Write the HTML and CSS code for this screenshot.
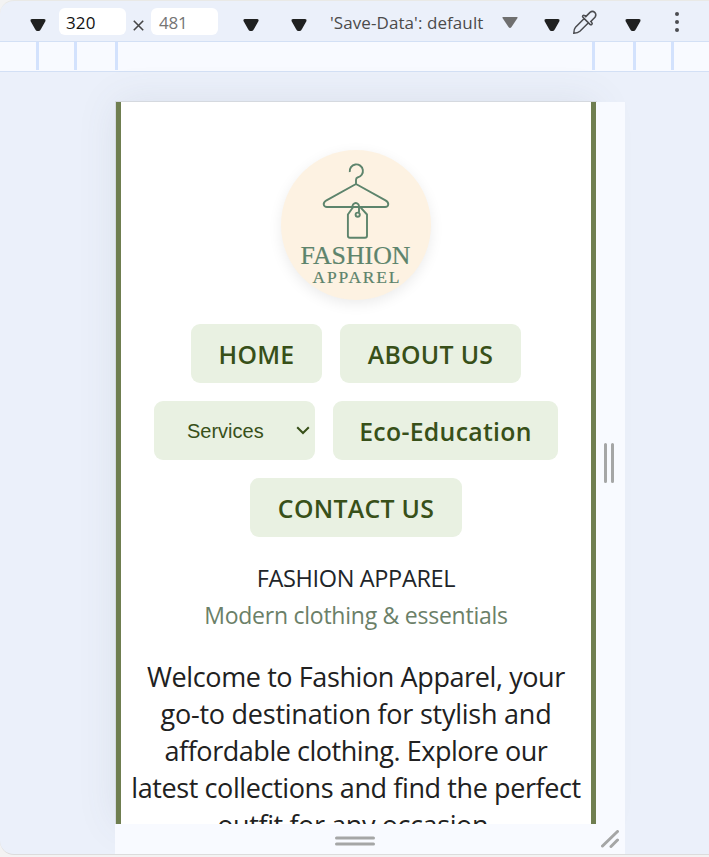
FILE: index.html
```html
<!DOCTYPE html>
<html lang="en">
<head>
<meta charset="utf-8">
<title>Fashion Apparel</title>
<link rel="stylesheet" href="styles.css">
</head>
<body>
<div class="panel">
  <header class="toolbar">
    <svg class="caret c1" viewBox="0 0 16 12"><path d="M2 0h12q2 0 1.500 2L11 10q-1 2-2 2H7q-1 0-2-2L.5 2Q0 0 2 0z"/></svg>
    <span class="dim">320</span>
    <svg class="times" viewBox="0 0 11 11"><path d="M.8.8l9.400 9.400M10.200.8L.8 10.200"/></svg>
    <span class="dim muted">481</span>
    <svg class="caret c2" viewBox="0 0 16 12"><path d="M2 0h12q2 0 1.500 2L11 10q-1 2-2 2H7q-1 0-2-2L.5 2Q0 0 2 0z"/></svg>
    <svg class="caret c3" viewBox="0 0 16 12"><path d="M2 0h12q2 0 1.500 2L11 10q-1 2-2 2H7q-1 0-2-2L.5 2Q0 0 2 0z"/></svg>
    <span class="save">'Save-Data': default</span>
    <svg class="caret grey" viewBox="0 0 16 12"><path d="M1 0h14q1 0 .5 1L9.500 10q-1.500 2-3 0L.5 1Q0 0 1 0z"/></svg>
    <svg class="caret c4" viewBox="0 0 16 12"><path d="M2 0h12q2 0 1.500 2L11 10q-1 2-2 2H7q-1 0-2-2L.5 2Q0 0 2 0z"/></svg>
    <svg class="dropper" viewBox="0 0 26 26"><path d="M12.200 9.500L3.500 18.200Q1.800 20 1.800 24.200Q6 24 7.900 22.300L16.500 13.700M11 8.400l7 7q1 .8 1.800 0q.9-1 0-1.900l-1-1.100 4.200-4.200q1.700-2.300 0-4.600-2.500-2.300-5-.2l-4.200 4.200-1.100-1q-1-.8-1.800 0-.8.9.1 1.800z"/></svg>
    <svg class="caret c5" viewBox="0 0 16 12"><path d="M2 0h12q2 0 1.500 2L11 10q-1 2-2 2H7q-1 0-2-2L.5 2Q0 0 2 0z"/></svg>
    <svg class="more" viewBox="0 0 4 20"><circle cx="2" cy="2" r="2"/><circle cx="2" cy="10" r="2"/><circle cx="2" cy="18" r="2"/></svg>
  </header>
  <div class="ruler"><i></i><i></i><i></i><i></i><i></i><i></i></div>
  <div class="stage">
    <main class="device">
      <svg class="logo" viewBox="0 0 150 150">
        <g class="lines">
          <path d="M68.800 22A6.600 6.600 0 1 1 76.500 27.500Q75 28 75 30V34L45.500 50.300C41 53 42.500 57 46 57H104C108 57 108.500 52.500 104.500 50.300L75 34"/>
          <path d="M72 57.300L66.900 64.500V85.700q0 2 2 2H84q2 0 2-2V64.500L79.500 57.300M72.200 58.500A3.300 3.300 0 1 1 78 56V62.500"/>
          <circle cx="76.700" cy="64.700" r="2.100"/>
        </g>
        <text class="brand" x="19.500" y="114" textLength="110" lengthAdjust="spacingAndGlyphs">FASHION</text>
        <text class="brand small" x="31.500" y="132.500" textLength="87" lengthAdjust="spacing">APPAREL</text>
      </svg>
      <nav class="nav">
        <a class="btn home">HOME</a><a class="btn about">ABOUT US</a>
        <a class="btn services"><span>Services</span><svg viewBox="0 0 14 9"><path d="M1.200 1.200L7 7l5.800-5.800"/></svg></a><a class="btn eco">Eco-Education</a>
        <a class="btn contact">CONTACT US</a>
      </nav>
      <div class="title">FASHION APPAREL</div>
      <div class="tagline">Modern clothing &amp; essentials</div>
      <p class="welcome"><span class="w1">Welcome to Fashion Apparel, your</span><span class="w2">go-to destination for stylish and</span><span class="w3">affordable clothing. Explore our</span><span class="w4">latest collections and find the perfect</span><span class="w5">outfit for any occasion.</span></p>
    </main>
    <div class="resize-right"><svg viewBox="0 0 10 40"><path d="M1.500 1.500v37M8.500 1.500v37"/></svg></div>
    <div class="resize-bottom">
      <svg class="grip" viewBox="0 0 40 10"><path d="M1.500 2h37M1.500 8h37"/></svg>
      <svg class="corner" viewBox="0 0 18 18"><path d="M1.500 16L16.500 1.500M10 16.500l6.500-6.500"/></svg>
    </div>
  </div>
</div>
</body>
</html>
```
FILE: styles.css
```css
* { box-sizing: border-box; }
body { margin: 0; height: 857px; overflow: hidden; background: #f3f3f3; font-family: "Open Sans", sans-serif; }
svg { display: block; flex: none; }
.panel { height: 855px; margin-top: 0; border-top: 1px solid #e9e9e6; border-bottom: 1px solid #dcdcdc; border-radius: 14px 0 0 14px; background: #ebf0fa; overflow: hidden; }
.toolbar { height: 40px; display: flex; align-items: flex-start; padding-left: 30px; }
.caret { width: 16px; height: 12px; margin-top: 18px; fill: #202121; }
.dim { width: 67px; height: 27px; margin: 7px 0 0 13px; padding-left: 7px; border-radius: 6px; background: #fff; color: #111; font-size: 17px; line-height: 29px; letter-spacing: 0.1px; }
.muted { margin-left: 7px; color: #757575; padding-left: 8px; letter-spacing: -0.2px; }
.times { width: 11px; height: 11px; margin: 19px 0 0 7px; fill: none; stroke: #474747; stroke-width: 1.6; }
.c2 { margin-left: 25px; }
.c3 { margin-left: 32px; }
.save { width: 156px; margin: 8px 0 0 23px; white-space: nowrap; color: #4b4b4b; font-size: 17px; line-height: 28px; letter-spacing: 0.08px; }
.grey { margin: 16px 0 0 16px; fill: #6f6f6f; }
.c4 { margin-left: 26px; }
.dropper { width: 26px; height: 26px; margin: 8px 0 0 12px; fill: none; stroke: #4b4c50; stroke-width: 1.5; }
.c5 { margin-left: 27px; }
.more { width: 4px; height: 20px; margin: 11px 0 0 34px; fill: #4b4c50; }
.ruler { height: 31px; display: flex; border: solid #d3e0f5; border-width: 1px 0; background: #f8faff; padding-left: 36px; }
.ruler i { width: 3px; height: 28px; background: #d3e2fd; margin-right: 35px; }
.ruler i:nth-child(2) { margin-right: 38px; }
.ruler i:nth-child(3) { margin-right: 474px; }
.ruler i:nth-child(4) { margin-right: 38px; }
.stage { display: grid; grid-template-columns: 481px 29px; grid-template-rows: 722px 30px; padding: 30px 0 0 115px; }
.device { margin-left: 1px; border: solid #6f7e50; border-width: 0 5px; background: #fff; padding-top: 48px; overflow: hidden; display: flex; flex-direction: column; align-items: center; box-shadow: 0 0 0 1px #d5d9df, 0 0 38px rgba(80, 90, 110, .1); }
.logo { width: 150px; height: 150px; border-radius: 50%; background: #fdf2e2; box-shadow: 0 4px 14px rgba(0, 0, 0, .08); }
.lines { fill: none; stroke: #5d846c; stroke-width: 1.9; stroke-linejoin: round; }
.brand { fill: #5d846c; stroke: #5d846c; stroke-width: .2; font: 25px "Liberation Serif", serif; }
.small { font-size: 17.5px; }
.nav { width: 440px; margin-top: 24px; display: flex; flex-wrap: wrap; justify-content: center; gap: 18px; }
.btn { height: 59px; border-radius: 9px; background: #e9f1e2; color: #385019; display: flex; align-items: center; justify-content: center; font-size: 24.8px; font-weight: 600; letter-spacing: .3px; white-space: nowrap; padding-top: 1px; }
.home { width: 131px; }
.about { width: 181px; }
.services { width: 161px; font: 20px "Liberation Sans", sans-serif; letter-spacing: 0; justify-content: flex-start; padding: 0 5px 0 33px; }
.services span { padding-top: 2px; }
.services svg { width: 14px; height: 9px; margin-left: auto; fill: none; stroke: #385019; stroke-width: 2; }
.eco { width: 225px; }
.contact { width: 212px; }
.title { margin-top: 23px; height: 37px; line-height: 37px; font-size: 23.5px; letter-spacing: -.35px; color: #212529; }
.tagline { height: 37px; line-height: 37px; font-size: 23px; letter-spacing: -.25px; color: #6b8068; }
.welcome { margin: 24px 0 0; display: flex; flex-direction: column; align-items: center; font-size: 27px; line-height: 37px; letter-spacing: -.4px; color: #212121; white-space: nowrap; }
.w2 { letter-spacing: -.24px; }
.w3 { letter-spacing: -.46px; }
.resize-right, .resize-bottom { background: #f8faff; position: relative; display: flex; align-items: center; justify-content: center; }
.resize-right svg { width: 10px; height: 40px; margin-right: 3px; }
.resize-bottom { grid-column: 1 / -1; }
.resize-bottom svg, .resize-right svg { fill: none; stroke: #a5a6a6; stroke-width: 3; stroke-linecap: round; }
.grip { width: 40px; height: 10px; margin: 3px 30px 0 0; }
.corner { position: absolute; right: 6px; top: 6px; width: 18px; height: 18px; }
```
